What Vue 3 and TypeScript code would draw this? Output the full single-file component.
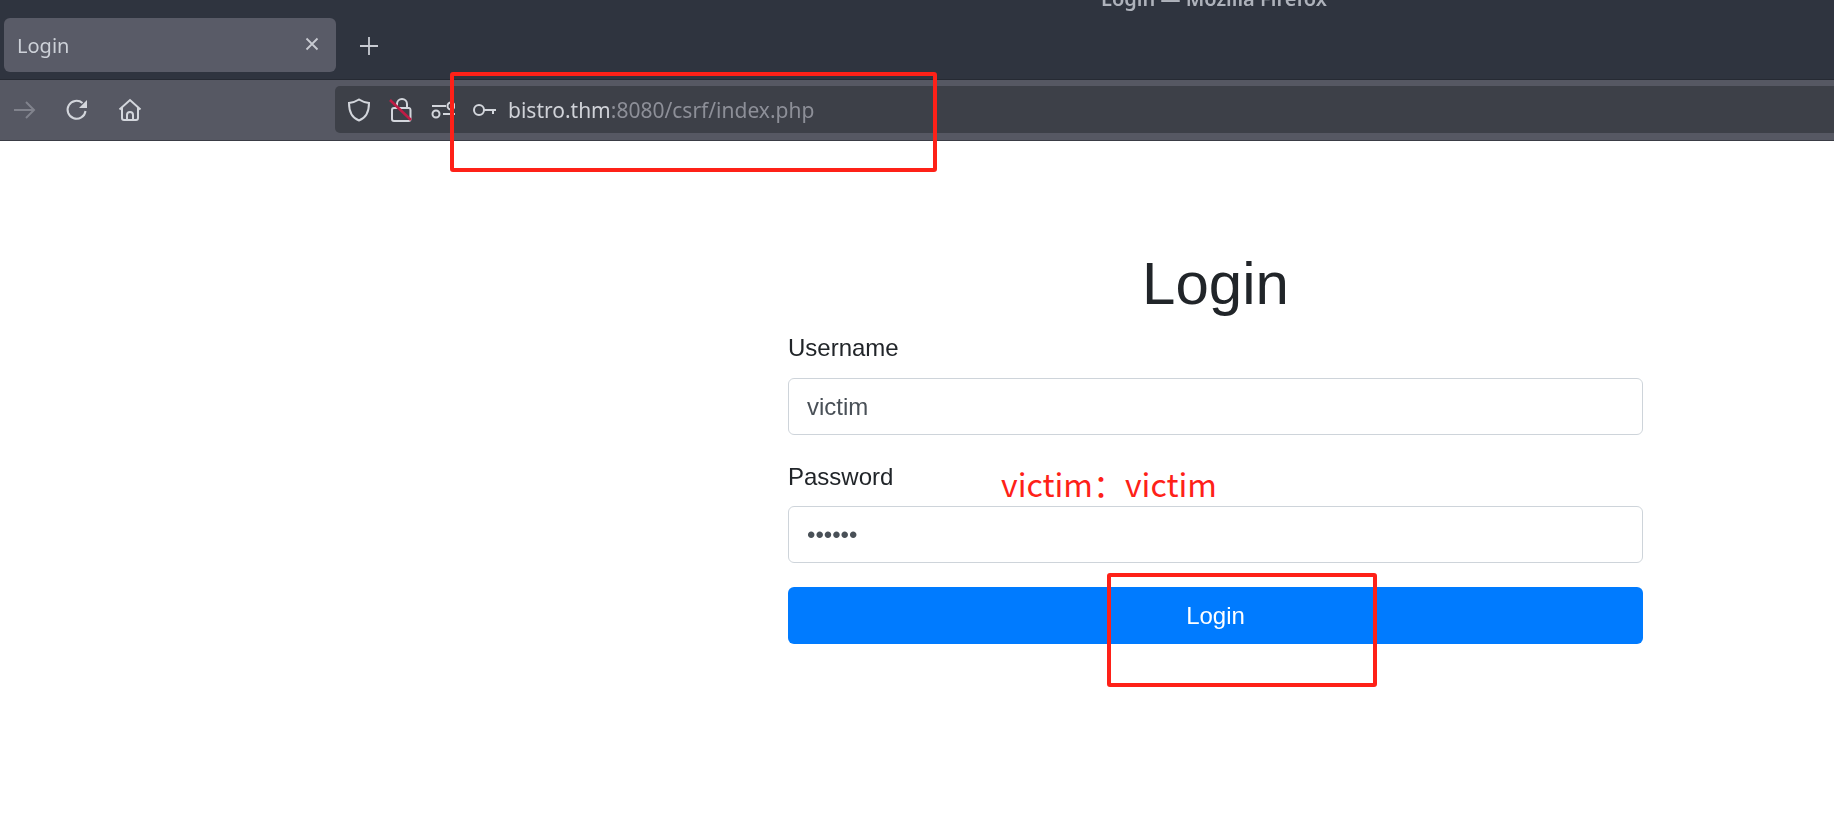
<template>
  <div class="page">
    <header class="chrome">
      <div class="title-strip"><span class="window-title">Login — Mozilla Firefox</span></div>
      <div class="tab-strip">
        <div class="tab">
          <span class="tab-label">Login</span>
          <svg class="tab-close" width="16" height="16" viewBox="0 0 16 16">
            <path d="M2.5 2.5l11 11M13.5 2.5l-11 11" />
          </svg>
        </div>
        <svg class="new-tab" width="20" height="20" viewBox="0 0 20 20">
          <path d="M10 1v18M1 10h18" />
        </svg>
      </div>
      <div class="toolbar">
        <div class="nav-buttons">
          <svg class="icon icon-dim" width="24" height="24" viewBox="0 0 24 24">
            <path d="M2 12h20M14 4l8 8-8 8" />
          </svg>
          <svg class="icon" width="24" height="24" viewBox="0 0 24 24">
            <path d="M20.5 13a9 9 0 1 1-3-8" />
            <path class="solid" d="M22 2v8h-8z" />
          </svg>
          <svg class="icon" width="24" height="24" viewBox="0 0 24 24">
            <path d="M1.5 11.5L12 2l10.500 9.500M4 9.500V20a2 2 0 0 0 2 2h12a2 2 0 0 0 2-2V9.500M9 22v-5a3 3 0 0 1 6 0v5" />
          </svg>
        </div>
        <div class="urlbar">
          <svg class="icon" width="24" height="24" viewBox="0 0 24 24">
            <path d="M12 1.500c3 2 6 3 10 3.500 0 9-3 15-10 17.500C5 20 2 14 2 5c4-.5 7-1.500 10-3.500z" />
          </svg>
          <svg class="icon" width="24" height="26" viewBox="0 0 24 26">
            <path d="M8 11V7a5 5 0 0 1 10 0v4M5 11h15a2 2 0 0 1 1.500 2v9a2 2 0 0 1-2 2H5a2 2 0 0 1-2-2v-9a2 2 0 0 1 2-2z" />
            <path class="strike" d="M1 3l21 20" />
          </svg>
          <svg class="icon sliders" width="24" height="18" viewBox="0 0 24 18">
            <path d="M1 5h14M12 13h12" />
            <circle cx="20" cy="5" r="3.500" />
            <circle cx="5" cy="13" r="3.500" />
          </svg>
          <svg class="icon key" width="24" height="14" viewBox="0 0 24 14">
            <circle cx="6" cy="7" r="5" />
            <path d="M11 7h12M20 7v4" />
          </svg>
          <span class="url"><span class="url-host">bistro.thm</span>:8080/csrf/index.php</span>
        </div>
      </div>
    </header>

    <main class="content">
      <form class="login-form" @submit.prevent>
        <h1 class="heading">Login</h1>
        <div class="group">
          <label class="field-label" for="username">Username</label>
          <input id="username" class="field" type="text" value="victim" />
        </div>
        <div class="group">
          <label class="field-label" for="password">Password</label>
          <input id="password" class="field" type="password" value="victim" />
        </div>
        <button class="submit" type="submit">Login</button>
      </form>
    </main>

    <!-- hand-drawn annotations on top of the screenshot -->
    <div class="mark mark-url" />
    <div class="mark mark-button" />
    <span class="note">victim：victim</span>
  </div>
</template>

<script setup lang="ts">
</script>

<style>
html, body {
  background: #fff;
  overflow: hidden;
}
</style>

<style scoped>
.page {
  position: relative;
  height: 829px;
  overflow: hidden;
  font-family: "Liberation Sans", Arial, sans-serif;
}

/* ── Browser chrome ── */
.chrome {
  filter: blur(0.5px);
}
.title-strip {
  height: 18px;
  padding-left: 594px;
  overflow: hidden;
  background: #2f343f;
  text-align: center;
}
.window-title {
  display: block;
  margin-top: -13px;
  font: 600 20px/24px "Noto Sans", sans-serif;
  color: #aeb2bb;
}
.tab-strip {
  display: flex;
  align-items: flex-start;
  height: 62px;
  box-sizing: border-box;
  padding-left: 4px;
  background: #2f343f;
  border-bottom: 1px solid #262a33;
}
.tab {
  display: flex;
  align-items: center;
  justify-content: space-between;
  width: 332px;
  height: 54px;
  box-sizing: border-box;
  padding: 0 16px 0 13px;
  background: #595b67;
  border-radius: 6px;
}
.tab-label {
  font: 20px "Noto Sans", sans-serif;
  color: #cdd1d8;
}
.tab-close path,
.new-tab path {
  fill: none;
  stroke: #c8cbd2;
  stroke-width: 1.800;
}
.tab-close {
  margin-top: -3px;
}
.new-tab {
  margin: 18px 0 0 23px;
}
.toolbar {
  display: flex;
  align-items: center;
  height: 61px;
  box-sizing: border-box;
  padding: 6px 0 7px;
  background: #565863;
  border-bottom: 1px solid #3a3c45;
}
.nav-buttons {
  display: flex;
  align-items: center;
  gap: 29px;
  width: 335px;
  box-sizing: border-box;
  padding-left: 12px;
}
.urlbar {
  display: flex;
  align-items: center;
  flex: 1;
  height: 47px;
  padding-left: 12px;
  background: #3d4048;
  border-radius: 5px 0 0 5px;
}
.icon {
  flex: none;
  fill: none;
  stroke: #d3d6dc;
  stroke-width: 2;
}
.icon-dim {
  stroke: #81838d;
}
.icon .solid {
  fill: #d3d6dc;
  stroke: none;
}
.icon .strike {
  stroke: #c01c45;
  stroke-width: 2.500;
}
.urlbar .icon + .icon {
  margin-left: 18px;
}
.urlbar .sliders {
  margin-left: 17px;
}
.urlbar .key {
  margin-left: 15px;
}
.url {
  margin-left: 11px;
  font: 21px "Noto Sans", sans-serif;
  color: #8d8f98;
  white-space: nowrap;
}
.url-host {
  color: #d0d2d8;
}

/* ── Login form ── */
.content {
  padding: 107px 0 0 788px;
  filter: blur(0.3px);
}
.login-form {
  width: 855px;
}
.heading {
  margin: 0 0 10px;
  font-size: 60px;
  font-weight: 400;
  line-height: 72px;
  text-align: center;
  color: #212529;
}
.group {
  margin-bottom: 24px;
}
.field-label {
  display: block;
  margin-bottom: 12px;
  font-size: 24px;
  line-height: 36px;
  color: #212529;
}
.group + .group .field-label {
  margin-top: 1px;
  margin-bottom: 11px;
}
.field {
  display: block;
  width: 100%;
  height: 57px;
  box-sizing: border-box;
  padding: 9px 18px;
  font: 24px "Liberation Sans", Arial, sans-serif;
  color: #495057;
  background: #fff;
  border: 1.500px solid #ced4da;
  border-radius: 6px;
  outline: none;
}
.submit {
  display: block;
  width: 100%;
  height: 57px;
  font: 24px "Liberation Sans", Arial, sans-serif;
  color: #fff;
  background: #007bff;
  border: 0;
  border-radius: 6px;
}

/* ── Annotations ── */
.mark {
  position: absolute;
  box-sizing: border-box;
  border: 4px solid #fe2118;
  border-radius: 3px;
}
.mark-url {
  left: 450px;
  top: 72px;
  width: 487px;
  height: 100px;
}
.mark-button {
  left: 1107px;
  top: 573px;
  width: 270px;
  height: 114px;
}
.note {
  position: absolute;
  left: 1001px;
  top: 460px;
  font: 32px/46px "Noto Sans CJK SC", "Noto Sans", sans-serif;
  color: #fe2118;
  white-space: nowrap;
}
</style>
